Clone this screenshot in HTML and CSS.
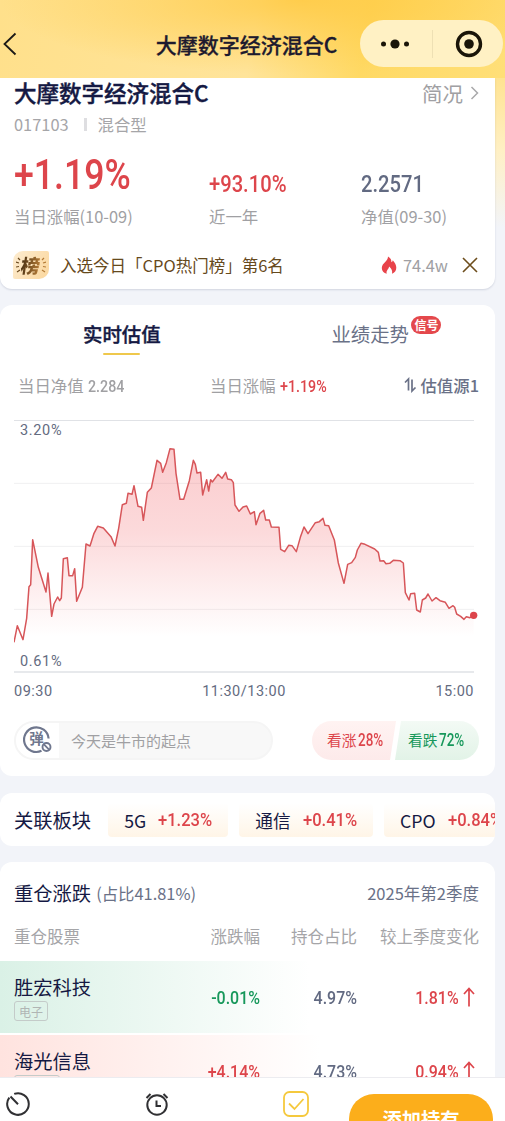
FILE: index.html
```
<!DOCTYPE html>
<html lang="zh-CN">
<head>
    <meta charset="UTF-8">
    <meta name="viewport" content="width=device-width, initial-scale=1.0">
    <title>大摩数字经济混合C</title>
    <link rel="stylesheet" href="styles.css">
</head>
<body>
    <div class="page">
        <header class="nav-bar">
            <svg class="nav-back" width="18" height="26" viewBox="0 0 18 26"><path d="M15.500 2.500 4.500 13l11 10.500" fill="none" stroke="#1c1a17" stroke-width="1.800"/></svg>
            <h1>大摩数字经济混合C</h1>
            <div class="capsule">
                <svg width="30" height="12" viewBox="0 0 30 12"><circle cx="3.500" cy="6" r="2.500"/><circle cx="15" cy="6" r="4.600"/><circle cx="26.500" cy="6" r="2.500"/></svg>
                <span class="capsule-line"></span>
                <svg width="28" height="28" viewBox="0 0 28 28"><circle cx="14" cy="14" r="11.500" fill="none" stroke="#1a1508" stroke-width="3.400"/><circle cx="14" cy="14" r="4.800"/></svg>
            </div>
        </header>

        <main>
            <section class="card fund-card">
                <div class="fund-head">
                    <h2>大摩数字经济混合C</h2>
                    <a class="profile">简况<svg width="9" height="16" viewBox="0 0 9 16"><path d="M1.500 2 7.500 8l-6 6" fill="none" stroke="#a9a9ab" stroke-width="1.500"/></svg></a>
                </div>
                <div class="fund-code"><span>017103</span><i></i><span>混合型</span></div>
                <div class="stats">
                    <div class="stat">
                        <b class="num big red">+1.19%</b>
                        <span>当日涨幅(10-09)</span>
                    </div>
                    <div class="stat">
                        <b class="num red">+93.10%</b>
                        <span>近一年</span>
                    </div>
                    <div class="stat">
                        <b class="num slate">2.2571</b>
                        <span>净值(09-30)</span>
                    </div>
                </div>
                <div class="rank">
                    <span class="rank-icon">
                        <svg width="5" height="18" viewBox="0 0 5 18"><path d="M2 2l2 2M0 6l3 1M0 11l3-.5M1 16l3-2" stroke="#6b4a20" stroke-width="1.200"/></svg>
                        <b>榜</b>
                        <svg width="5" height="18" viewBox="0 0 5 18"><path d="M3 2 1 4M5 6 2 7M5 11l-3-.5M4 16l-3-2" stroke="#b47b37" stroke-width="1.200"/></svg>
                    </span>
                    <span class="rank-text">入选今日「CPO热门榜」第6名</span>
                    <svg width="16" height="19" viewBox="0 0 16 19"><path d="M7 .5c2.500 1.300 3.600 3.600 3.400 5.700.8-.4 1.200-1 1.400-1.900 2.300 2.500 3.500 5 3.500 7.500 0 3-1.600 5-4.300 6 .6-2.500-.2-4.800-2.900-7.200-.2 2-1.300 2.700-2 3.900-.7 1.100-.7 2.200-.3 3.300C2.700 17 .8 15 .8 12.100c0-2.800 1.700-4.500 3.600-6.400C6 4 7 2.500 7 .5z" fill="#e8434a"/></svg>
                    <span class="heat">74.4w</span>
                    <svg width="16" height="16" viewBox="0 0 16 16"><path d="M1 1l14 14M15 1 1 15" stroke="#6d4d1c" stroke-width="1.600"/></svg>
                </div>
            </section>

            <section class="card chart-card">
                <div class="tabs">
                    <div class="tab active">实时估值</div>
                    <div class="tab">业绩走势<em>信号</em></div>
                </div>
                <div class="quote">
                    <span class="quote-item">当日净值 <b class="num small">2.284</b></span>
                    <span class="quote-item">当日涨幅 <b class="num small red">+1.19%</b></span>
                    <span class="source"><svg width="13" height="16" viewBox="0 0 13 16"><path d="M1 5.500 4.500 2v11.500M8 2.500V14l3.500-3.500" fill="none" stroke="#6a7187" stroke-width="1.700"/></svg>估值源1</span>
                </div>
                <svg class="chart" width="466" height="254" viewBox="0 0 1398 762">
                    <defs>
                        <linearGradient id="area" gradientUnits="userSpaceOnUse" x1="0" y1="80" x2="0" y2="650">
                            <stop offset="0" stop-color="#f0454b" stop-opacity=".28"/>
                            <stop offset=".45" stop-color="#f0454b" stop-opacity=".2"/>
                            <stop offset="1" stop-color="#f0454b" stop-opacity="0"/>
                        </linearGradient>
                    </defs>
                    <g class="grid">
                        <path class="edge" d="M0 1h1380M0 756h1380"/>
                        <path d="M0 190h1380M0 379h1380M0 568h1380"/>
                    </g>
                    <path id="chart-area" fill="url(#area)"/>
                    <polyline id="chart-line" points="0,667 10,617 27,659 38,595 45,500 50,494 56,359 73,442 96,516 102,459 113,589 120,552 131,531 137,542 142,534 148,416 160,413 165,467 176,467 182,446 188,544 205,502 216,372 228,378 240,340 251,319 268,324 291,350 303,378 314,325 325,254 337,250 342,220 354,223 360,197 372,259 383,262 388,301 400,217 412,204 429,121 440,130 446,157 457,128 468,86 480,88 486,160 498,238 509,238 526,182 538,121 544,133 549,159 560,157 566,225 578,179 584,213 590,179 595,186 612,163 624,175 635,157 641,177 652,179 658,188 663,255 675,274 687,261 698,258 709,282 721,275 726,314 738,280 749,271 755,300 766,300 772,321 795,322 800,388 812,395 824,376 834,377 847,395 859,352 870,321 882,341 904,308 916,305 927,295 933,316 944,317 961,360 973,429 990,490 1001,433 1013,428 1024,412 1030,390 1041,370 1053,373 1082,387 1093,397 1098,423 1109,422 1116,431 1127,430 1138,421 1158,422 1168,429 1174,518 1185,540 1190,521 1202,520 1208,570 1219,576 1225,540 1235,534 1242,522 1254,543 1266,533 1278,542 1294,547 1305,565 1317,557 1322,562 1328,582 1340,589 1350,598 1357,590 1368,593 1379,586"/>
                    <circle cx="1379" cy="586" r="11" fill="#dd454b"/>
                    <text x="18" y="44">3.20%</text>
                    <text x="18" y="738">0.61%</text>
                </svg>
                <div class="axis"><span>09:30</span><span>11:30/13:00</span><span>15:00</span></div>
                <div class="talk">
                    <div class="danmu">
                        <div class="danmu-switch">
                            <svg width="30" height="30" viewBox="0 0 30 30">
                                <path d="M25.600 13.500A12.300 12.300 0 1 0 18.500 25.800" fill="none" stroke="#6f778e" stroke-width="2.200"/>
                                <text x="13.500" y="19" text-anchor="middle">弹</text>
                                <circle cx="23.500" cy="22" r="4" fill="#fff" stroke="#6f778e" stroke-width="1.900"/>
                                <path d="M20.900 19.400l5.200 5.200" stroke="#6f778e" stroke-width="1.700"/>
                            </svg>
                        </div>
                        <span>今天是牛市的起点</span>
                    </div>
                    <div class="vote">
                        <div class="vote-up">看涨<b class="num small">28%</b></div>
                        <div class="vote-down">看跌<b class="num small">72%</b></div>
                    </div>
                </div>
            </section>

            <section class="card sectors">
                <h3>关联板块</h3>
                <div class="sector">5G<b class="num mid red">+1.23%</b></div>
                <div class="sector">通信<b class="num mid red">+0.41%</b></div>
                <div class="sector">CPO<b class="num mid red">+0.84%</b></div>
            </section>

            <section class="card holdings">
                <div class="holdings-head">
                    <h3>重仓涨跌</h3><span>(占比41.81%)</span><span class="quarter">2025年第2季度</span>
                </div>
                <div class="row row-head">
                    <span>重仓股票</span><span>涨跌幅</span><span>持仓占比</span><span>较上季度变化</span>
                </div>
                <div class="row down">
                    <div class="stock">胜宏科技<small>电子</small></div>
                    <b class="num mid green">-0.01%</b>
                    <b class="num mid slate">4.97%</b>
                    <div class="change"><b class="num mid red">1.81%</b><svg width="12" height="20" viewBox="0 0 12 20"><path d="M6 19.500V1.500M1 7l5-5.500L11 7" fill="none" stroke="#dd454b" stroke-width="1.700"/></svg></div>
                </div>
                <div class="row up">
                    <div class="stock">海光信息<small>半导体</small></div>
                    <b class="num mid red">+4.14%</b>
                    <b class="num mid slate">4.73%</b>
                    <div class="change"><b class="num mid red">0.94%</b><svg width="12" height="20" viewBox="0 0 12 20"><path d="M6 19.500V1.500M1 7l5-5.500L11 7" fill="none" stroke="#dd454b" stroke-width="1.700"/></svg></div>
                </div>
            </section>
        </main>

        <footer class="bottom-bar">
            <svg width="26" height="26" viewBox="0 0 26 26"><path d="M9.200 2.900A10.800 10.800 0 1 1 4.300 6.600M5.500 5.500l7.500 7.700" fill="none" stroke="#303033" stroke-width="2"/></svg>
            <svg width="26" height="26" viewBox="0 0 26 26"><g fill="none" stroke="#303033" stroke-width="2"><circle cx="13" cy="14" r="9.700"/><path d="M12.500 9.500V15h4.500M2.500 7l4-4M23.500 7l-4-4"/></g></svg>
            <svg width="28" height="28" viewBox="0 0 28 28"><g fill="none" stroke="#f5c93e" stroke-width="1.800"><rect x="2" y="2" width="24" height="24" rx="5.500"/><path d="M7 13.500l5.500 5.500 9-10"/></g></svg>
            <button type="button">添加持有</button>
        </footer>
    </div>
    <script>
        // Close the line down to the baseline to get the filled area
        const line = document.getElementById('chart-line').getAttribute('points');
        document.getElementById('chart-area').setAttribute('d', 'M0,667 L' + line + ' L1379,667 Z');
    </script>
</body>
</html>
```
FILE: styles.css
```
* {
    box-sizing: border-box;
}
body {
    margin: 0;
    font-family: "Noto Sans CJK SC", sans-serif;
    font-size: 16.4px;
    color: #151943;
    background-color: #f2f4f9;
}
h1, h2, h3 {
    margin: 0;
}
svg {
    display: block;
    flex-shrink: 0;
}
.page {
    height: 1121px;
    overflow: hidden;
    display: flex;
    flex-direction: column;
    background: linear-gradient(180deg, #ffe391 78px, #fff0c4 150px, #f2f4f9 228px);
}
main {
    flex: 1;
    min-height: 0;
    overflow: hidden;
    padding-right: 10px;
}
.card {
    background-color: #fff;
    border-radius: 12px;
    margin-bottom: 16px;
}

/* numbers are drawn narrower than the text font */
.num {
    display: inline-block;
    font-family: Roboto, sans-serif;
    font-weight: 500;
    font-size: 24px;
    line-height: 1;
    transform: scaleX(0.84);
    transform-origin: left center;
}
.num.big {
    font-size: 43px;
    transform: scaleX(0.83);
}
.num.mid {
    font-size: 19px;
    transform: scaleX(0.87);
}
.num.small {
    font-size: 16.8px;
    transform: scaleX(0.85);
}
.red {
    color: #dd454b;
}
.green {
    color: #17985b;
}
.slate {
    color: #626a82;
}

/* top bar */
.nav-bar {
    height: 78px;
    flex-shrink: 0;
    padding: 10px 2px 0 0;
    display: grid;
    grid-template-columns: 133px 1fr 143px;
    align-items: center;
    background: radial-gradient(ellipse 300px 75px at 300px 0, rgba(255, 200, 62, .8), rgba(255, 208, 80, 0)), linear-gradient(100deg, #ffe08b, #ffe49a 50%, #ffd964 72%, #ffdf78);
}
.nav-bar h1 {
    font-size: 21px;
    font-weight: 500;
    line-height: 30px;
    text-align: center;
    white-space: nowrap;
    color: #1d1a2e;
    -webkit-text-stroke: .3px #1d1a2e;
}
.capsule {
    height: 47px;
    border-radius: 24px;
    background-color: #fff1c4;
    display: flex;
    align-items: center;
    padding: 0 20px;
    justify-content: space-between;
    margin-top: -1px;
    fill: #1a1508;
}
.capsule-line {
    width: 1px;
    height: 28px;
    background-color: #eee0b4;
}

/* fund summary */
.fund-card {
    height: 211px;
    border-radius: 0 0 12px 12px;
    padding: 0 16px 0 14px;
    box-shadow: 0 1px 2px rgba(60, 70, 110, .18);
}
.fund-head {
    display: flex;
    justify-content: space-between;
    height: 32px;
    line-height: 28px;
}
.fund-head h2 {
    font-size: 22.5px;
    font-weight: 500;
    -webkit-text-stroke: .4px #151943;
}
.profile {
    display: flex;
    align-items: center;
    gap: 7px;
    height: 30px;
    font-size: 20.5px;
    color: #a0a0a3;
}
.fund-code {
    display: flex;
    align-items: center;
    height: 28px;
    color: #a5a5a8;
}
.fund-code i {
    width: 3px;
    height: 13px;
    margin: 0 11px 0 15px;
    background-color: #dedee1;
}
.stats {
    display: grid;
    grid-template-columns: 195px 152px 1fr;
    height: 90px;
    align-items: end;
}
.stat {
    display: flex;
    flex-direction: column;
    gap: 8px;
}
.stat span {
    line-height: 24px;
    color: #a0a0a3;
    white-space: nowrap;
}
.rank {
    display: flex;
    align-items: center;
    height: 28px;
    margin-top: 23px;
    color: #66491c;
}
.rank-icon {
    width: 36px;
    height: 28px;
    margin: 0 11px 0 -1px;
    border-radius: 10px 2px 10px 2px;
    background: linear-gradient(120deg, #fdecd0, #fbd79d);
    display: flex;
    align-items: center;
    justify-content: center;
}
.rank-icon b {
    font-size: 19px;
    line-height: 26px;
    font-weight: 900;
    transform: skewX(-8deg);
    background: linear-gradient(90deg, #4b3213, #b47b37);
    background-clip: text;
    -webkit-background-clip: text;
    color: transparent;
}
.rank-text {
    flex: 1;
    font-size: 16.5px;
    white-space: nowrap;
}
.heat {
    margin: 0 14px 0 6px;
    color: #a0a0a3;
}
.rank > svg:last-child {
    margin-right: 1px;
}

/* estimate chart */
.chart-card {
    height: 471px;
    padding: 13px 16px 0 14px;
}
.tabs {
    display: flex;
    height: 38px;
    padding-left: 69px;
    justify-content: space-between;
    padding-right: 70px;
}
.tab {
    position: relative;
    font-size: 19.4px;
    line-height: 32px;
    color: #6a7187;
}
.tab.active {
    color: #151943;
    font-weight: 500;
    -webkit-text-stroke: .4px #151943;
}
.tab.active::after {
    content: "";
    position: absolute;
    left: 20px;
    right: 21px;
    bottom: 1px;
    height: 2px;
    border-radius: 1px;
    background-color: #efc84c;
}
.tab em {
    position: absolute;
    left: 80px;
    top: -2px;
    width: 30px;
    height: 18px;
    border-radius: 9px;
    background-color: #e4484c;
    color: #fff;
    font-size: 12px;
    line-height: 17px;
    font-style: normal;
    font-weight: 700;
    text-align: center;
}
.quote {
    display: grid;
    grid-template-columns: 192px 1fr auto;
    align-items: center;
    height: 24px;
    margin-top: 17px;
    padding-left: 4px;
    color: #a0a0a3;
    white-space: nowrap;
}
.quote .num {
    margin-left: 1px;
}
.source {
    display: flex;
    align-items: center;
    gap: 3px;
    font-weight: 500;
    color: #6a7187;
}
.chart {
    margin-top: 23px;
}
.chart .grid path {
    stroke: #f0f0f1;
    stroke-width: 3;
}
.chart .grid .edge {
    stroke: #e0e2e6;
    stroke-width: 4;
}
.chart polyline {
    fill: none;
    stroke: #d7565a;
    stroke-width: 4.5;
    stroke-linejoin: round;
}
.chart text {
    font: 43.5px Roboto, sans-serif;
    letter-spacing: 2px;
    fill: #646b7f;
}
.axis {
    display: flex;
    justify-content: space-between;
    height: 18px;
    margin-top: 9px;
    padding-right: 5px;
    font: 14.5px/18px Roboto, sans-serif;
    letter-spacing: .5px;
    color: #646b7f;
}
.talk {
    display: flex;
    justify-content: space-between;
    margin-top: 20px;
}
.danmu {
    width: 259px;
    height: 39px;
    display: flex;
    align-items: center;
    border: 2px solid #f5f5f5;
    border-radius: 20px;
    background-color: #f8f8f8;
    font-size: 15px;
    color: #a0a0a3;
    overflow: hidden;
}
.danmu-switch {
    width: 43px;
    height: 35px;
    margin-right: 12px;
    padding: 2px 0 0 7px;
    background-color: #fff;
}
.danmu-switch text {
    font-size: 14.5px;
    font-weight: 700;
    fill: #6f778e;
}
.vote {
    display: flex;
    width: 167px;
    height: 39px;
    border-radius: 20px;
    overflow: hidden;
    font-size: 14.7px;
    line-height: 38px;
    white-space: nowrap;
}
.vote .num {
    margin-left: 2px;
    font-size: 17.5px;
    transform: scaleX(.77);
}
.vote-up {
    width: 86px;
    padding-left: 15px;
    color: #dd454b;
    background: linear-gradient(180deg, #fff3f2, #fdeaea);
    clip-path: polygon(0 0, 84px 0, 78px 100%, 0 100%);
}
.vote-down {
    flex: 1;
    padding-left: 13px;
    margin-left: -3px;
    color: #17985b;
    background: linear-gradient(180deg, #f3faf5, #e2f3e7);
    clip-path: polygon(6px 0, 100% 0, 100% 100%, 0 100%);
}

/* related sectors */
.sectors {
    display: flex;
    align-items: center;
    gap: 11px;
    height: 53px;
    margin-top: 17px;
    padding-left: 14px;
    overflow: hidden;
}
.sectors h3, .holdings h3 {
    flex-shrink: 0;
    font-size: 19.3px;
    line-height: 28px;
    font-weight: 400;
}
.sectors h3 {
    margin-right: 6px;
}
.sector {
    display: flex;
    flex-shrink: 0;
    align-items: center;
    gap: 12px;
    height: 34px;
    padding: 0 8px 0 16px;
    border-radius: 4px;
    font-size: 17.7px;
    background: linear-gradient(180deg, #fff, #fff5e7);
}

/* top holdings */
.holdings {
    height: 280px;
    padding-top: 16px;
}
.holdings-head {
    display: flex;
    align-items: center;
    height: 30px;
    padding: 0 16px 0 14px;
    color: #6a7187;
}
.holdings-head h3 {
    margin-right: 5px;
    color: #151943;
}
.quarter {
    margin-left: auto;
    font-size: 16.5px;
}
.row {
    display: grid;
    grid-template-columns: 146px 100px 97px 122px;
    align-items: center;
    height: 72px;
    margin-bottom: 2px;
    padding-left: 14px;
    text-align: right;
    white-space: nowrap;
}
.row > :first-child {
    text-align: left;
}
.row .num {
    transform: scaleX(.84);
    transform-origin: right center;
}
.row-head {
    height: 52px;
    margin-bottom: 1px;
    padding-top: 3px;
    font-size: 16.5px;
    color: #a5a5a8;
}
.down {
    background: linear-gradient(90deg, #daf1e6, #fff 310px);
}
.up {
    background: linear-gradient(90deg, #ffe3df, #fff 320px);
}
.stock {
    font-size: 19.3px;
    line-height: 28px;
}
.stock small {
    display: block;
    width: fit-content;
    height: 20px;
    padding: 0 4px;
    border: 1px solid #c4cbc9;
    border-radius: 3px;
    font-size: 12px;
    line-height: 19px;
    color: #b0b5b4;
}
.change {
    display: flex;
    align-items: center;
    justify-content: flex-end;
    gap: 4px;
    padding-right: 4px;
}

/* bottom actions */
.bottom-bar {
    display: flex;
    flex-shrink: 0;
    height: 44px;
    padding: 13px 12px 0 5px;
    background-color: #fff;
    border-top: 1px solid #ececf0;
    overflow: hidden;
}
.bottom-bar svg:nth-child(2) {
    margin-left: 113px;
}
.bottom-bar svg:nth-child(3) {
    margin: -1px 0 0 112px;
}
.bottom-bar button {
    width: 144px;
    height: 50px;
    margin: 3px 0 0 auto;
    flex-shrink: 0;
    padding: 0;
    border: none;
    border-radius: 25px;
    background-color: #fcae1b;
    color: #fff;
    font: 700 19.3px/48px "Noto Sans CJK SC", sans-serif;
}
```
